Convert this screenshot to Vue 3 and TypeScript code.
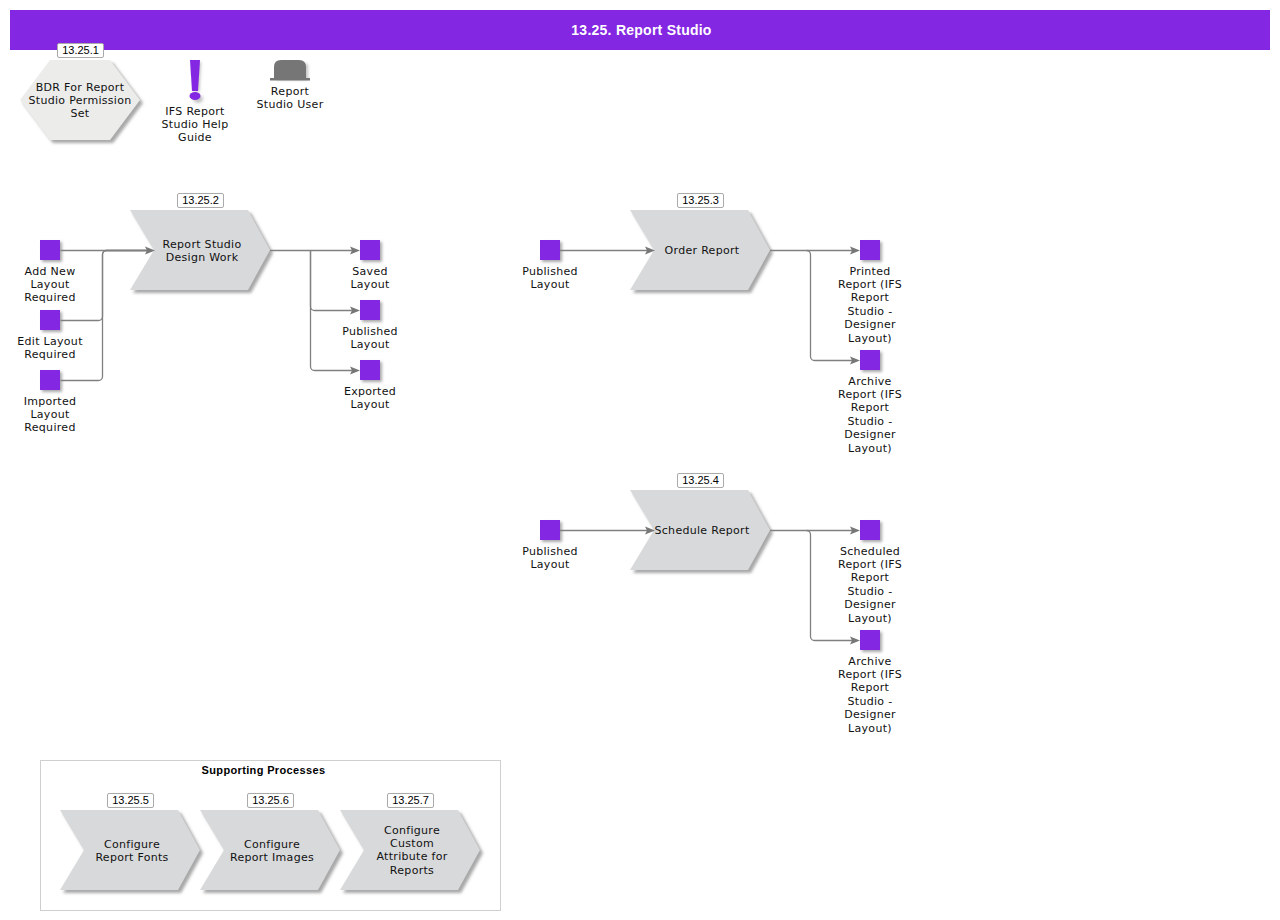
<script setup lang="ts">
interface Chevron { x: number; y: number; text: string[]; badge: string }

const chevrons: Chevron[] = [
  { x: 130, y: 210, text: ['Report Studio', 'Design Work'], badge: '13.25.2' },
  { x: 630, y: 210, text: ['Order Report'], badge: '13.25.3' },
  { x: 630, y: 490, text: ['Schedule Report'], badge: '13.25.4' },
  { x: 60, y: 810, text: ['Configure', 'Report Fonts'], badge: '13.25.5' },
  { x: 200, y: 810, text: ['Configure', 'Report Images'], badge: '13.25.6' },
  { x: 340, y: 810, text: ['Configure', 'Custom', 'Attribute for', 'Reports'], badge: '13.25.7' },
]

const squares: Array<[number, number, string[]]> = [
  [40, 240, ['Add New', 'Layout', 'Required']],
  [40, 310, ['Edit Layout', 'Required']],
  [40, 370, ['Imported', 'Layout', 'Required']],
  [360, 240, ['Saved', 'Layout']],
  [360, 300, ['Published', 'Layout']],
  [360, 360, ['Exported', 'Layout']],
  [540, 240, ['Published', 'Layout']],
  [860, 240, ['Printed', 'Report (IFS', 'Report', 'Studio -', 'Designer', 'Layout)']],
  [860, 350, ['Archive', 'Report (IFS', 'Report', 'Studio -', 'Designer', 'Layout)']],
  [540, 520, ['Published', 'Layout']],
  [860, 520, ['Scheduled', 'Report (IFS', 'Report', 'Studio -', 'Designer', 'Layout)']],
  [860, 630, ['Archive', 'Report (IFS', 'Report', 'Studio -', 'Designer', 'Layout)']],
]

const lines: string[] = [
  'M60.5 250.5H148',
  'M60.5 320.5H98.5a4 4 0 0 0 4-4V254.5a4 4 0 0 1 4-4H148',
  'M60.5 380.5H98.5a4 4 0 0 0 4-4V254.5a4 4 0 0 1 4-4H148',
  'M270 250.5H354',
  'M310.5 250.5V306.5a4 4 0 0 0 4 4H354',
  'M310.5 250.5V366.5a4 4 0 0 0 4 4H354',
  'M560 250.5H648',
  'M770 250.5H854',
  'M806.5 250.5a4 4 0 0 1 4 4V356.5a4 4 0 0 0 4 4H854',
  'M560 530.5H648',
  'M770 530.5H854',
  'M806.5 530.5a4 4 0 0 1 4 4V636.5a4 4 0 0 0 4 4H854',
]

const arrows: Array<[number, number]> = [
  [155, 250], [360, 250], [360, 310], [360, 370], [655, 250],
  [860, 250], [860, 360], [655, 530], [860, 530], [860, 640],
]

const textTop: Record<number, number> = { 1: 33.6, 2: 27.6, 4: 13.6 }

function chevronPoints(c: Chevron): string {
  const { x, y } = c
  return `${x},${y} ${x + 118},${y} ${x + 140},${y + 40} ${x + 118},${y + 80} ${x},${y + 80} ${x + 24},${y + 40}`
}
function arrowPoints(a: [number, number]): string {
  const [x, y] = a
  return `${x},${y + 0.5} ${x - 10},${y - 3.5} ${x - 8},${y + 0.5} ${x - 10},${y + 4.5}`
}
function pos(x: number, y: number, w: number): Record<string, string> {
  return { left: `${x}px`, top: `${y}px`, width: `${w}px` }
}
</script>

<template>
  <div class="page">
    <h1 class="title">13.25. Report Studio</h1>
    <div class="canvas">
      <div class="support"><span>Supporting Processes</span></div>
      <svg class="art" width="1280" height="920" viewBox="0 0 1280 920">
        <defs>
          <filter id="sh" x="-20%" y="-20%" width="140%" height="140%">
            <feGaussianBlur stdDeviation="1.5" />
          </filter>
        </defs>
        <polygon class="shadow" points="50,60 110,60 140,100 110,140 50,140 20,100" transform="translate(3 3)" filter="url(#sh)" />
        <polygon class="hex" points="50,60 110,60 140,100 110,140 50,140 20,100" />
        <g v-for="c in chevrons" :key="c.badge">
          <polygon class="shadow" :points="chevronPoints(c)" transform="translate(3 3)" filter="url(#sh)" />
          <polygon class="chev" :points="chevronPoints(c)" />
        </g>
        <g v-for="(s, i) in squares" :key="i">
          <rect class="shadow" :x="s[0] + 2" :y="s[1] + 2" width="20" height="20" filter="url(#sh)" />
          <rect class="sq" :x="s[0]" :y="s[1]" width="20" height="20" />
        </g>
        <path v-for="(d, i) in lines" :key="'l' + i" class="line" :d="d" />
        <polygon v-for="(a, i) in arrows" :key="'a' + i" class="arrow" :points="arrowPoints(a)" />
        <!-- exclamation mark -->
        <path class="mark-shadow" d="M192 62h9l-1.6 30h-5.8zM198 95a5 4 0 1 0 .1 0z" filter="url(#sh)" />
        <path class="sq" d="M190 60h10l-2 31h-6z" />
        <ellipse class="sq" cx="195" cy="96" rx="5.5" ry="4" />
        <!-- hat -->
        <path class="mark-shadow" d="M277 64h31v16h-31z" filter="url(#sh)" />
        <path class="hat" d="M274 78v-11q0-7 7-7h18q7 0 7 7v11z" />
        <rect class="hat" x="270" y="78" width="40" height="2.5" />
      </svg>

      <div class="badge" :style="pos(57, 43, 47)">13.25.1</div>
      <div v-for="c in chevrons" :key="'b' + c.badge" class="badge" :style="pos(c.x + 47, c.y - 17, 47)">{{ c.badge }}</div>

      <div class="label" :style="pos(20, 80.6, 120)">
        <div>BDR For Report</div><div>Studio Permission</div><div>Set</div>
      </div>
      <div class="label" :style="pos(155, 104.6, 80)">
        <div>IFS Report</div><div>Studio Help</div><div>Guide</div>
      </div>
      <div class="label" :style="pos(250, 84.6, 80)">
        <div>Report</div><div>Studio User</div>
      </div>

      <div
        v-for="c in chevrons"
        :key="'t' + c.badge"
        class="label"
        :style="pos(c.x + 12, c.y + textTop[c.text.length], 120)"
      >
        <div v-for="t in c.text" :key="t">{{ t }}</div>
      </div>

      <div v-for="(s, i) in squares" :key="'s' + i" class="label" :style="pos(s[0] - 30, s[1] + 24.6, 80)">
        <div v-for="(t, j) in s[2]" :key="j">{{ t }}</div>
      </div>
    </div>
  </div>
</template>

<style>
html, body { margin: 0; background: #fff; }
</style>

<style scoped>
.page {
  position: relative;
  width: 1280px;
  height: 920px;
  overflow: hidden;
  background: #fff;
  padding: 10px 10px 0;
  box-sizing: border-box;
}
.title {
  margin: 0;
  height: 40px;
  background: #8427e2;
  color: #fff;
  text-align: center;
  padding-left: 3px;
  box-sizing: border-box;
  font: bold 14px/40px "Liberation Sans", Arial, sans-serif;
  letter-spacing: 0.25px;
}
.canvas {
  position: absolute;
  inset: 0;
}
.art {
  position: absolute;
  left: 0;
  top: 0;
}
.support {
  position: absolute;
  left: 40px;
  top: 760px;
  width: 459px;
  height: 149px;
  border: 1px solid #cfcfcf;
  text-align: center;
  box-sizing: content-box;
  font: bold 11px/18px "Liberation Sans", Arial, sans-serif;
  letter-spacing: 0.35px;
  color: #000;
}
.support span {
  position: relative;
  left: -7px;
}
.shadow { fill: #a8a8a8; }
.mark-shadow { fill: #c4c4c4; }
.hex { fill: #ececeb; }
.chev { fill: #d8d9db; }
.sq { fill: #8427e2; }
.hat { fill: #767676; }
.line { fill: none; stroke: #808080; stroke-width: 1.3; }
.arrow { fill: #777; }
.badge {
  position: absolute;
  height: 15px;
  box-sizing: border-box;
  background: #fff;
  border: 1px solid #aaa;
  border-radius: 2px;
  text-align: center;
  color: #000;
  font: 11px/13px "Liberation Sans", Arial, sans-serif;
}
.label {
  position: absolute;
  text-align: center;
  color: #111;
  font: 11px/13.4px "DejaVu Sans", Verdana, sans-serif;
  letter-spacing: 0.3px;
  white-space: nowrap;
}
</style>
